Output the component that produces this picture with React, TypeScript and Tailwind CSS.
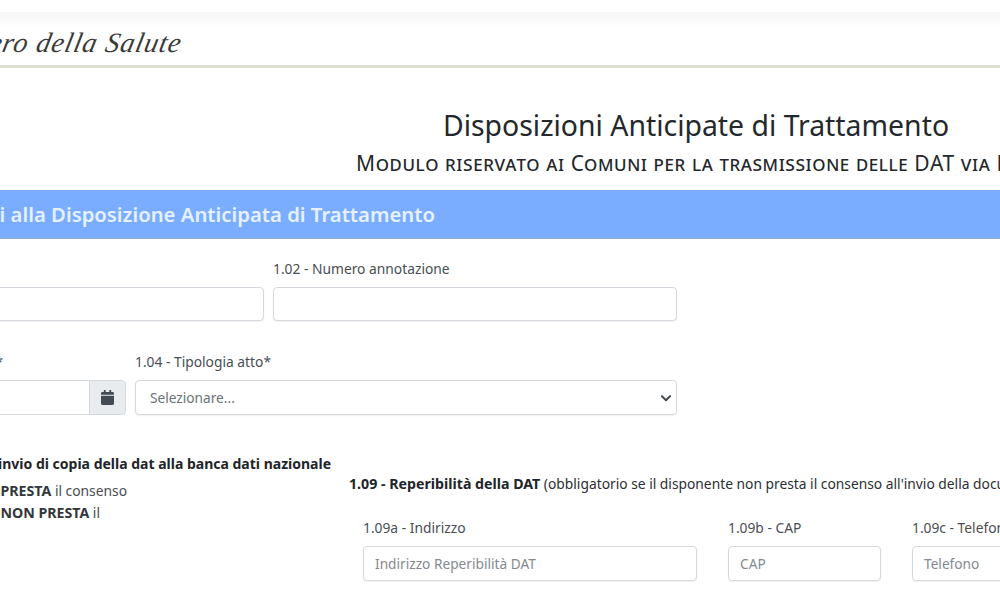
import { FaCalendar } from "react-icons/fa";

const inputClass =
  "h-[34px] rounded-[4px] border border-[#d5d9dd] bg-white px-[11px] pt-[1px] flex items-center text-[13.7px] text-[#858a90] shadow-[0_1px_2px_rgba(0,0,0,0.06)]";

export default function App() {
  return (
    <div className="w-[1000px] h-[600px] overflow-hidden bg-white text-[#494e54] text-[13.8px] font-['Noto_Sans','Open_Sans',sans-serif]">
      {/* Header */}
      <div className="mt-3 h-[56px] border-b-[3px] border-[#dfdfd0] bg-gradient-to-b from-[#f6f6f6] to-white to-30%">
        <div className="w-[182px] flex justify-end pt-[13px]">
          <span className="inline-block whitespace-nowrap font-['Liberation_Serif',serif] italic text-[28px] tracking-[1px] leading-[36px] text-[#3a3a3a] -skew-x-12">
            Ministero della Salute
          </span>
        </div>
      </div>

      {/* Title */}
      <div className="w-[1392px] text-center">
        <h1 className="mt-[37px] text-[28.4px] leading-[40px] text-[#24282c]">
          Disposizioni Anticipate di Trattamento
        </h1>
        <h2 className="mt-[3px] text-[21px] tracking-[0.6px] leading-[30px] text-[#24282c] [font-variant:small-caps]">
          Modulo riservato ai Comuni per la trasmissione delle DAT via PEC
        </h2>
      </div>

      {/* Section bar */}
      <div className="mt-[12px] h-[49px] bg-[#7aadff] border-b border-[#8fa9cc] flex items-center">
        <div className="w-[435px] flex justify-end">
          <span className="whitespace-nowrap text-[20.3px] font-semibold text-[#e6f1ff]">
            1 - Dati relativi alla Disposizione Anticipata di Trattamento
          </span>
        </div>
      </div>

      {/* Row 1 */}
      <div className="mt-[20px] flex gap-[9px] ml-[-100px]">
        <div className="w-[364px] flex flex-col">
          <div className="h-[28px]" />
          <div className={inputClass} />
        </div>
        <div className="w-[404px] flex flex-col">
          <label className="h-[28px] leading-[20px] whitespace-nowrap">1.02 - Numero annotazione</label>
          <div className={inputClass} />
        </div>
      </div>

      {/* Row 2 */}
      <div className="mt-[31px] flex gap-[9px] ml-[-100px]">
        <div className="w-[226px] flex flex-col">
          <label className="h-[28px] leading-[20px] w-[103px] flex justify-end">
            <span className="whitespace-nowrap">1.03 - Data atto*</span>
          </label>
          <div className="flex h-[35px]">
            <div className="w-[189px] rounded-l-[4px] border border-[#d5d9dd] border-r-0 bg-white" />
            <div className="w-[37px] rounded-r-[4px] border border-[#d5d9dd] bg-[#e9ecef] flex items-center justify-center">
              <FaCalendar className="w-[13px] h-[15px] text-[#454b55]" />
            </div>
          </div>
        </div>
        <div className="w-[542px] flex flex-col">
          <label className="h-[28px] leading-[20px] whitespace-nowrap">1.04 - Tipologia atto*</label>
          <div className={`${inputClass} h-[35px] justify-between pl-[14px] pr-[3px]`}>
            <span className="text-[#6c7277]">Selezionare...</span>
            <svg viewBox="0 0 16 16" className="w-[12px] h-[12px] mr-[1px]" fill="none" stroke="#3f454b" strokeWidth="2.6" strokeLinecap="round" strokeLinejoin="round">
              <path d="M2.5 5.5L8 11l5.5-5.5" />
            </svg>
          </div>
        </div>
      </div>

      {/* Bottom */}
      <div className="mt-[38px] flex">
        <div className="w-[349px] shrink-0 flex flex-col">
          <div className="w-[331px] flex justify-end h-[20px] items-center">
            <span className="whitespace-nowrap text-[14px] font-bold text-[#212529]">
              1.08 - Consenso all'invio di copia della dat alla banca dati nazionale
            </span>
          </div>
          <div className="mt-[7px] w-[127px] flex justify-end h-[22px] items-center">
            <span className="whitespace-nowrap">
              Il disponente <b className="text-[14.2px] font-bold text-[#33373c]">PRESTA</b> il consenso
            </span>
          </div>
          <div className="w-[100px] flex justify-end h-[22px] items-center">
            <span className="whitespace-nowrap">
              Il disponente <b className="text-[14.2px] font-bold text-[#33373c]">NON PRESTA</b> il
            </span>
          </div>
        </div>
        <div className="flex-1 min-w-0">
          <p className="mt-[11px] pt-[10px] h-[30px] leading-[20px] whitespace-nowrap text-[#2b2f33]">
            <b className="text-[14.2px] font-bold text-[#212529]">1.09 - Reperibilità della DAT</b> (obbligatorio se il disponente non presta il consenso all'invio della documentazione)
          </p>
          <div className="mt-[24px] ml-[14px] flex gap-[31px]">
            <div className="w-[334px] shrink-0">
              <label className="block h-[28px] leading-[20px]">1.09a - Indirizzo</label>
              <div className={`${inputClass} h-[35px]`}>Indirizzo Reperibilità DAT</div>
            </div>
            <div className="w-[153px] shrink-0">
              <label className="block h-[28px] leading-[20px]">1.09b - CAP</label>
              <div className={`${inputClass} h-[35px]`}>CAP</div>
            </div>
            <div className="w-[153px] shrink-0">
              <label className="block h-[28px] leading-[20px] whitespace-nowrap">1.09c - Telefono</label>
              <div className={`${inputClass} h-[35px]`}>Telefono</div>
            </div>
          </div>
        </div>
      </div>
    </div>
  );
}
